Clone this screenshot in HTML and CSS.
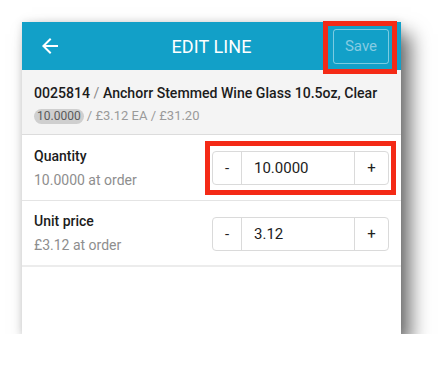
FILE: index.html
```html
<!DOCTYPE html>
<html>
<head>
<meta charset="utf-8">
<link rel="stylesheet" href="styles.css">
</head>
<body>
<div class="screen">
  <header class="bar">
    <div class="bar-left">
      <svg class="back" width="24" height="24" viewBox="0 0 24 24"><path fill="#fff" d="M20 11H7.83l5.59-5.59L12 4l-8 8 8 8 1.41-1.41L7.83 13H20v-2z"/></svg>
    </div>
    <div class="bar-title">EDIT LINE</div>
    <div class="bar-right">
      <button class="save">Save</button>
      <span class="mark mark-save"></span>
    </div>
  </header>
  <section class="item">
    <div class="item-title">0025814 <span class="sep">/</span> Anchorr Stemmed Wine Glass 10.5oz, Clear</div>
    <div class="item-sub"><span class="pill">10.0000</span> / £3.12 EA / £31.20</div>
  </section>
  <div class="row">
    <div class="label">
      <div class="label-main">Quantity</div>
      <div class="label-sub">10.0000 at order</div>
    </div>
    <div class="stepper">
      <span class="btn minus">-</span>
      <span class="val">10.0000</span>
      <span class="btn plus">+</span>
      <span class="mark mark-qty"></span>
    </div>
  </div>
  <div class="row last">
    <div class="label">
      <div class="label-main">Unit price</div>
      <div class="label-sub">£3.12 at order</div>
    </div>
    <div class="stepper">
      <span class="btn minus">-</span>
      <span class="val">3.12</span>
      <span class="btn plus">+</span>
    </div>
  </div>
</div>
</body>
</html>
```
FILE: styles.css
```css
html, body {
  margin: 0;
  padding: 0;
  background: #fff;
}
body {
  font-family: Roboto, "Liberation Sans", sans-serif;
  padding: 22px 0 0 22px;
}
.screen {
  width: 379px;
  height: 312px;
  background: #fff;
  box-shadow: 10px 12px 18px rgba(0,0,0,0.55), 0 0 8px rgba(0,0,0,0.12);
  display: flex;
  flex-direction: column;
}
.bar {
  height: 48px;
  background: #12a0c8;
  display: grid;
  grid-template-columns: 1fr auto 1fr;
  align-items: center;
  flex-shrink: 0;
}
.bar-left {
  padding-left: 16px;
  display: flex;
  align-items: center;
}
.back { display: block; }
.bar-title {
  color: #fff;
  font-size: 18px;
  letter-spacing: 0.1px;
}
.bar-right {
  display: flex;
  justify-content: flex-end;
  padding-right: 12px;
  position: relative;
}
.save {
  width: 56px;
  height: 35px;
  border: 1px solid rgba(255,255,255,0.45);
  border-radius: 3px;
  background: transparent;
  color: #86cbe2;
  font-family: Roboto, "Liberation Sans", sans-serif;
  font-size: 15px;
  padding: 0;
}
.mark {
  position: absolute;
  border: 5px solid #f42a16;
  box-sizing: border-box;
  pointer-events: none;
}
.mark-save {
  right: 4px;
  top: -8px;
  width: 74px;
  height: 53px;
}
.item {
  background: #f4f4f4;
  padding: 13px 12px 0 12px;
  height: 65px;
  box-sizing: border-box;
  border-bottom: 1px solid #dcdcdc;
  flex-shrink: 0;
}
.item-title {
  color: #1c1c1c;
  font-size: 14.1px;
  font-weight: 500;
  line-height: 20px;
  white-space: nowrap;
}
.sep { color: #8a8a8a; font-weight: 400; }
.item-sub {
  margin-top: 5px;
  color: #9a9a9a;
  font-size: 13px;
  line-height: 16px;
  display: flex;
  align-items: center;
  white-space: pre;
}
.pill {
  background: #cfcfcf;
  color: #5a5a5a;
  font-size: 12px;
  border-radius: 8px;
  padding: 0 3px;
  height: 15px;
  line-height: 15px;
}
.row {
  height: 66px;
  box-sizing: border-box;
  border-bottom: 1px solid #e4e4e4;
  display: flex;
  align-items: center;
  justify-content: space-between;
  padding: 0 12px;
  flex-shrink: 0;
}
.row.last { border-bottom: 2px solid #ececec; }
.label-main {
  color: #1c1c1c;
  font-size: 14px;
  font-weight: 500;
  line-height: 20px;
}
.label-sub {
  color: #8e8e8e;
  font-size: 14px;
  line-height: 20px;
  margin-top: 4px;
}
.stepper {
  position: relative;
  width: 177px;
  height: 34px;
  box-sizing: border-box;
  border: 1px solid #dadada;
  border-radius: 4px;
  display: flex;
  align-items: stretch;
  margin-top: 1px;
}
.btn {
  display: flex;
  align-items: center;
  justify-content: center;
  color: #222;
  font-size: 15px;
}
.minus { width: 28px; border-right: 1px solid #dadada; }
.plus { width: 33px; border-left: 1px solid #dadada; }
.val {
  flex: 1;
  display: flex;
  align-items: center;
  padding-left: 12px;
  color: #1c1c1c;
  font-size: 15px;
}
.mark-qty {
  left: -8px;
  top: -11px;
  right: -8px;
  bottom: -11px;
}
```
